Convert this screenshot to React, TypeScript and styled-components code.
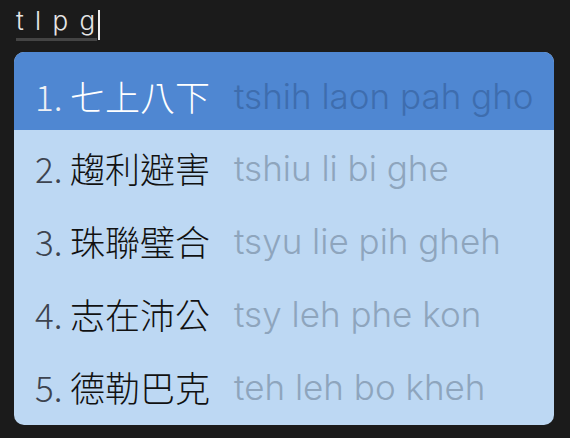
import React from "react";
import styled, { createGlobalStyle } from "styled-components";

const Global = createGlobalStyle`
  html, body { margin: 0; padding: 0; background: #1b1b1b; }
  body { font-family: Inter, "Noto Sans CJK TC", sans-serif; }
`;

const Page = styled.div`
  width: 570px;
  height: 438px;
  background: #1b1b1b;
  padding: 0 16px 0 14px;
  box-sizing: border-box;
  display: flex;
  flex-direction: column;
`;

const InputLine = styled.div`
  height: 52px;
  display: flex;
  align-items: flex-start;
  padding: 4px 0 0 2px;
  box-sizing: border-box;
`;

const Preedit = styled.span`
  font-size: 26px;
  font-weight: 300;
  line-height: 34px;
  color: #e6e6e6;
  letter-spacing: 2px;
  white-space: pre;
  border-bottom: 3px solid #444;
`;

const Caret = styled.span`
  width: 2px;
  height: 30px;
  background: #f0f0f0;
  margin: 6px 0 0 1px;
`;

const Panel = styled.div`
  width: 540px;
  height: 373px;
  background: #bdd8f3;
  border-radius: 10px;
  overflow: hidden;
  display: flex;
  flex-direction: column;
`;

const Row = styled.div<{ $active?: boolean; $first?: boolean }>`
  height: ${(p) => (p.$first ? 78 : 73)}px;
  padding-top: ${(p) => (p.$first ? 9 : 2)}px;
  box-sizing: border-box;
  background: ${(p) => (p.$active ? "#4f87d2" : "transparent")};
  display: flex;
  align-items: center;
  padding-left: 21px;
  font-size: 35px;
  white-space: nowrap;
`;

const Index = styled.span<{ $active?: boolean }>`
  width: 35px;
  font-family: "Noto Sans CJK TC", sans-serif;
  font-weight: 300;
  color: ${(p) => (p.$active ? "#eef0f4" : "#3d4450")};
`;

const Word = styled.span<{ $active?: boolean }>`
  font-family: "Noto Sans CJK TC", sans-serif;
  font-weight: 300;
  color: ${(p) => (p.$active ? "#ffffff" : "#111111")};
  margin-right: 24px;
`;

const Roman = styled.span<{ $active?: boolean }>`
  font-weight: 300;
  font-size: 35px;
  color: ${(p) => (p.$active ? "#3e6dae" : "#8ea5bd")};
`;

const items = [
  ["七上八下", "tshih laon pah gho"],
  ["趨利避害", "tshiu li bi ghe"],
  ["珠聯璧合", "tsyu lie pih gheh"],
  ["志在沛公", "tsy leh phe kon"],
  ["德勒巴克", "teh leh bo kheh"],
];

export default function App() {
  return (
    <>
      <Global />
      <Page>
        <InputLine>
          <Preedit>t l p g</Preedit>
          <Caret />
        </InputLine>
        <Panel>
          {items.map(([w, r], i) => (
            <Row key={i} $active={i === 0} $first={i === 0}>
              <Index $active={i === 0}>{i + 1}.</Index>
              <Word $active={i === 0}>{w}</Word>
              <Roman $active={i === 0}>{r}</Roman>
            </Row>
          ))}
        </Panel>
      </Page>
    </>
  );
}
